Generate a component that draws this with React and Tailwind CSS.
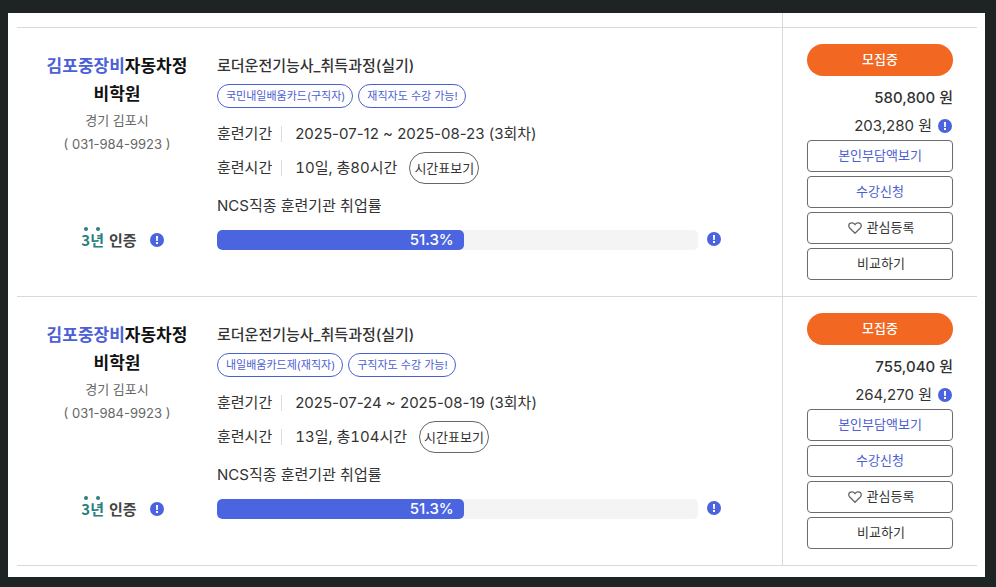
const courses = [
  {
    id: 1,
    title: "로더운전기능사_취득과정(실기)",
    tags: ["국민내일배움카드(구직자)", "재직자도 수강 가능!"],
    period: "2025-07-12 ~ 2025-08-23 (3회차)",
    hours: "10일, 총80시간",
    rate: 51.3,
    price: "580,800",
    selfPay: "203,280",
  },
  {
    id: 2,
    title: "로더운전기능사_취득과정(실기)",
    tags: ["내일배움카드제(재직자)", "구직자도 수강 가능!"],
    period: "2025-07-24 ~ 2025-08-19 (3회차)",
    hours: "13일, 총104시간",
    rate: 51.3,
    price: "755,040",
    selfPay: "264,270",
  },
];

function InfoButton({ label }) {
  return (
    <button type="button" aria-label={label} className="block size-[14px] shrink-0">
      <svg viewBox="0 0 14 14" className="size-full">
        <circle cx="7" cy="7" r="7" fill="#4b63de" />
        <path d="M6 3h2l-.2 5H6.2zM6 9h2v2H6z" fill="#fff" />
      </svg>
    </button>
  );
}

function HeartIcon() {
  return (
    <svg viewBox="0 0 14 14" className="size-[14px]" fill="none" stroke="#666" strokeWidth="1.3" strokeLinejoin="round">
      <path d="M7 12.2 1.7 7C.3 5.5.5 3.4 1.9 2.4 3.5 1.3 5.7 1.7 7 3.7c1.3-2 3.5-2.4 5.1-1.3 1.4 1 1.6 3.1.2 4.6z" />
    </svg>
  );
}

function CertMark() {
  return (
    <div className="flex text-[15px] leading-6 font-bold text-[#444] font-['Noto_Sans_CJK_KR',sans-serif]">
      <span className="relative mr-[5px] text-[#2a7f80]">
        3년
        <span className="absolute -top-px left-[3px] size-1 rounded-full bg-[#2a7f80]" />
        <span className="absolute -top-px left-[15px] size-1 rounded-full bg-[#2a7f80]" />
      </span>
      인증
    </div>
  );
}

function ActionButton({ blue, children }) {
  return (
    <button
      type="button"
      className={`flex h-8 w-full items-center justify-center gap-[5px] rounded border border-[#6b6b70] text-[13px] ${blue ? "text-[#4b60d2]" : "pl-[2px] text-[#333]"}`}
    >
      {children}
    </button>
  );
}

function Detail({ label, children }) {
  return (
    <>
      <dt className="text-[15px] leading-6">{label}</dt>
      <dd className="flex items-center text-[15px] leading-6">
        <span className="mr-[13px] ml-[9px] h-4 w-px bg-[#ddd]" />
        {children}
      </dd>
    </>
  );
}

function CourseRow({ course }) {
  return (
    <article className="flex border-t border-[#d9d9d9]">
      <div className="flex w-[200px] shrink-0 flex-col items-center pt-6 text-center">
        <h3 className="text-[17px] leading-7 font-bold text-[#111]">
          <span className="text-[#4b60d8]">김포중장비</span>자동차정
          <br />
          비학원
        </h3>
        <p className="text-[13px] leading-6 text-[#666]">경기 김포시</p>
        <p className="text-[13px] leading-6 text-[#666]">( 031-984-9923 )</p>
        <div className="mt-[72px] flex items-center gap-[13px] pl-[11px]">
          <CertMark />
          <InfoButton label="3년 인증 안내" />
        </div>
      </div>

      <div className="min-w-0 flex-1 pt-[26px] pr-[61px] text-[#333]">
        <h4 className="text-[15px] leading-6 font-medium">
          <a href="#course">{course.title}</a>
        </h4>
        <ul className="mt-[6px] flex gap-[5px]">
          {course.tags.map((tag) => (
            <li key={tag} className="flex h-6 items-center rounded-full border border-[#4b60d2] pr-[7px] pl-2 text-[11px] text-[#4b60d2]">
              {tag}
            </li>
          ))}
        </ul>
        <dl className="mt-[14px] flex items-center">
          <Detail label="훈련기간">{course.period}</Detail>
        </dl>
        <dl className="mt-[6px] flex items-center">
          <Detail label="훈련시간">
            <span className="tabular-nums">{course.hours}</span>
            <button type="button" className="ml-3 flex h-8 items-center rounded-full border border-[#666] px-1 text-[13px]">
              시간표보기
            </button>
          </Detail>
        </dl>
        <p className="mt-[10px] text-[15px] leading-6">NCS직종 훈련기관 취업률</p>
        <div className="mt-3 flex gap-[9px]">
          <div className="h-5 flex-1 overflow-hidden rounded-[5px] bg-[#f4f4f4]">
            <div
              className="h-full rounded-[5px] bg-[#4b65e0] pr-[10px] text-right text-[15px] leading-5 font-medium text-white"
              style={{ width: `${course.rate}%` }}
            >
              {course.rate}%
            </div>
          </div>
          <div className="pt-[2px]">
            <InfoButton label="취업률 안내" />
          </div>
        </div>
      </div>

      <div className="w-[195px] shrink-0 border-l border-[#d9d9d9] px-6 py-4">
        <p className="flex h-8 items-center justify-center rounded-full bg-[#f26722] text-[13px] font-medium text-white">모집중</p>
        <p className="mt-2 text-right text-[15px] leading-7 font-medium text-[#333]">{course.price} 원</p>
        <p className="flex items-center justify-end gap-[6px] pr-px text-[15px] leading-7 text-[#333]">
          {course.selfPay} 원
          <InfoButton label="본인부담액 안내" />
        </p>
        <div className="flex flex-col gap-1">
          <ActionButton blue>본인부담액보기</ActionButton>
          <ActionButton blue>수강신청</ActionButton>
          <ActionButton>
            <HeartIcon />
            관심등록
          </ActionButton>
          <ActionButton>비교하기</ActionButton>
        </div>
      </div>
    </article>
  );
}

export default function App() {
  return (
    <div className="min-h-screen bg-[#1e2324] pt-[13px] pr-[11px] pb-[10px] pl-2 font-['Inter','Noto_Sans_CJK_KR',sans-serif]">
      <main className="bg-white pr-2 pb-[11px] pl-[9px]">
        <div className="flex h-[14px] justify-end">
          <div className="w-[195px] border-l border-[#d9d9d9]" />
        </div>
        <div className="border-b border-[#d9d9d9]">
          {courses.map((course) => (
            <CourseRow key={course.id} course={course} />
          ))}
        </div>
      </main>
    </div>
  );
}
